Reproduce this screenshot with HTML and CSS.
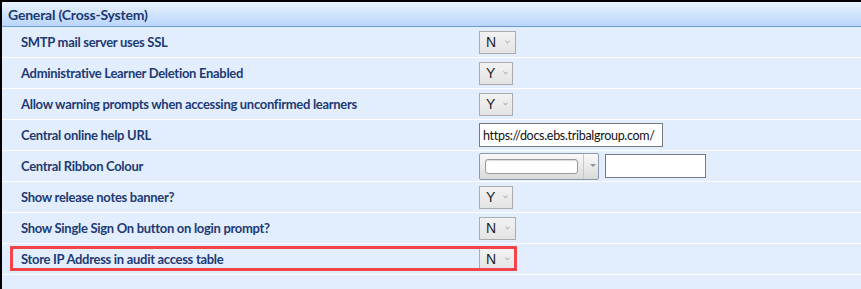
FILE: index.html
```html
<!DOCTYPE html>
<html lang="en">

<head>
    <meta charset="UTF-8">
    <title>General (Cross-System)</title>
    <link rel="stylesheet" href="styles.css">
</head>

<body>
    <div class="panel">
        <div class="panel-head">General (Cross-System)</div>

        <div class="row">
            <span class="label">SMTP mail server uses SSL</span>
            <span class="select wide">N <svg class="chev" viewBox="0 0 6 4"><path d="M0.5 0.5 L3 3 L5.5 0.5" /></svg></span>
        </div>
        <div class="row">
            <span class="label">Administrative Learner Deletion Enabled</span>
            <span class="select">Y <svg class="chev" viewBox="0 0 6 4"><path d="M0.5 0.5 L3 3 L5.5 0.5" /></svg></span>
        </div>
        <div class="row">
            <span class="label">Allow warning prompts when accessing unconfirmed learners</span>
            <span class="select">Y <svg class="chev" viewBox="0 0 6 4"><path d="M0.5 0.5 L3 3 L5.5 0.5" /></svg></span>
        </div>
        <div class="row">
            <span class="label">Central online help URL</span>
            <span class="text-input url">https://docs.ebs.tribalgroup.com/</span>
        </div>
        <div class="row">
            <span class="label">Central Ribbon Colour</span>
            <span class="colour-box">
                <span class="colour-field"></span>
                <span class="colour-btn"><svg viewBox="0 0 6 4"><path d="M0 0 L6 0 L3 3 Z" /></svg></span>
            </span>
            <span class="text-input hex"></span>
        </div>
        <div class="row">
            <span class="label">Show release notes banner?</span>
            <span class="select">Y <svg class="chev" viewBox="0 0 6 4"><path d="M0.5 0.5 L3 3 L5.5 0.5" /></svg></span>
        </div>
        <div class="row">
            <span class="label">Show Single Sign On button on login prompt?</span>
            <span class="select wide">N <svg class="chev" viewBox="0 0 6 4"><path d="M0.5 0.5 L3 3 L5.5 0.5" /></svg></span>
        </div>
        <div class="row marked">
            <span class="label">Store IP Address in audit access table</span>
            <span class="select wide">N <svg class="chev" viewBox="0 0 6 4"><path d="M0.5 0.5 L3 3 L5.5 0.5" /></svg></span>
            <span class="highlight"></span>
        </div>
        <div class="row empty"></div>
    </div>
</body>

</html>
```

FILE: styles.css
```css
body {
    margin: 0;
    background-color: #ffffff;
    font-family: Lato, "Open Sans", sans-serif;
}

.panel {
    width: 859px;
    height: 287px;
    border: 1px solid #000000;
    border-left-width: 2px;
    border-top-width: 2px;
    overflow: hidden;
    background-color: #ffffff;
}

.panel-head {
    height: 24px;
    padding-left: 6px;
    display: flex;
    align-items: center;
    background: linear-gradient(#e9f2fe, #bad6fa);
    border-bottom: 1px solid #6c9cd6;
    color: #1a3973;
    font-size: 14px;
    font-weight: 700;
    letter-spacing: -0.2px;
}

.row {
    position: relative;
    height: 30px;
    margin-bottom: 1px;
    display: flex;
    align-items: center;
    background-color: #e2eefd;
}

.row.empty {
    height: 14px;
}

.label {
    width: 458px;
    padding-left: 19px;
    color: #1e3a74;
    font-size: 13px;
    font-weight: 700;
    letter-spacing: -0.3px;
    white-space: nowrap;
}

.select {
    box-sizing: border-box;
    width: 34px;
    height: 23px;
    padding-left: 6px;
    display: flex;
    align-items: center;
    gap: 8px;
    border: 1px solid #acacac;
    background: linear-gradient(#f2f2f2, #e4e4e4);
    color: #222222;
    font-family: "Liberation Sans", Arial, sans-serif;
    font-size: 14px;
}

.select.wide {
    width: 37px;
    gap: 9px;
}

.chev {
    width: 5px;
    height: 4px;
    fill: none;
    stroke: #8a8a8a;
    stroke-width: 1;
}

.text-input {
    box-sizing: border-box;
    height: 24px;
    display: flex;
    align-items: center;
    border: 1px solid #7a7a7a;
    background-color: #ffffff;
    color: #111111;
    font-size: 12.5px;
    letter-spacing: -0.3px;
}

.url {
    width: 184px;
    padding-left: 3px;
}

.hex {
    width: 101px;
    margin-left: 6px;
}

.colour-box {
    box-sizing: border-box;
    width: 120px;
    height: 27px;
    display: flex;
    align-items: center;
    border: 1px solid #8b9aaf;
    border-radius: 2px;
    background: linear-gradient(#fafafa, #d9d9d9);
}

.colour-field {
    width: 91px;
    height: 13px;
    margin-left: 5px;
    border: 1px solid #9a9a9a;
    border-radius: 3px;
    background-color: #ffffff;
    box-shadow: inset 0 1px 1px rgba(0, 0, 0, 0.15);
}

.colour-btn {
    height: 25px;
    margin-left: 5px;
    padding-left: 6px;
    display: flex;
    align-items: center;
    border-left: 1px solid #c8c8c8;
}

.colour-btn svg {
    width: 6px;
    height: 4px;
    fill: #8a93a0;
}

.highlight {
    position: absolute;
    left: 8px;
    top: 2px;
    width: 501px;
    height: 19px;
    border: 3px solid #f5434a;
}
```
